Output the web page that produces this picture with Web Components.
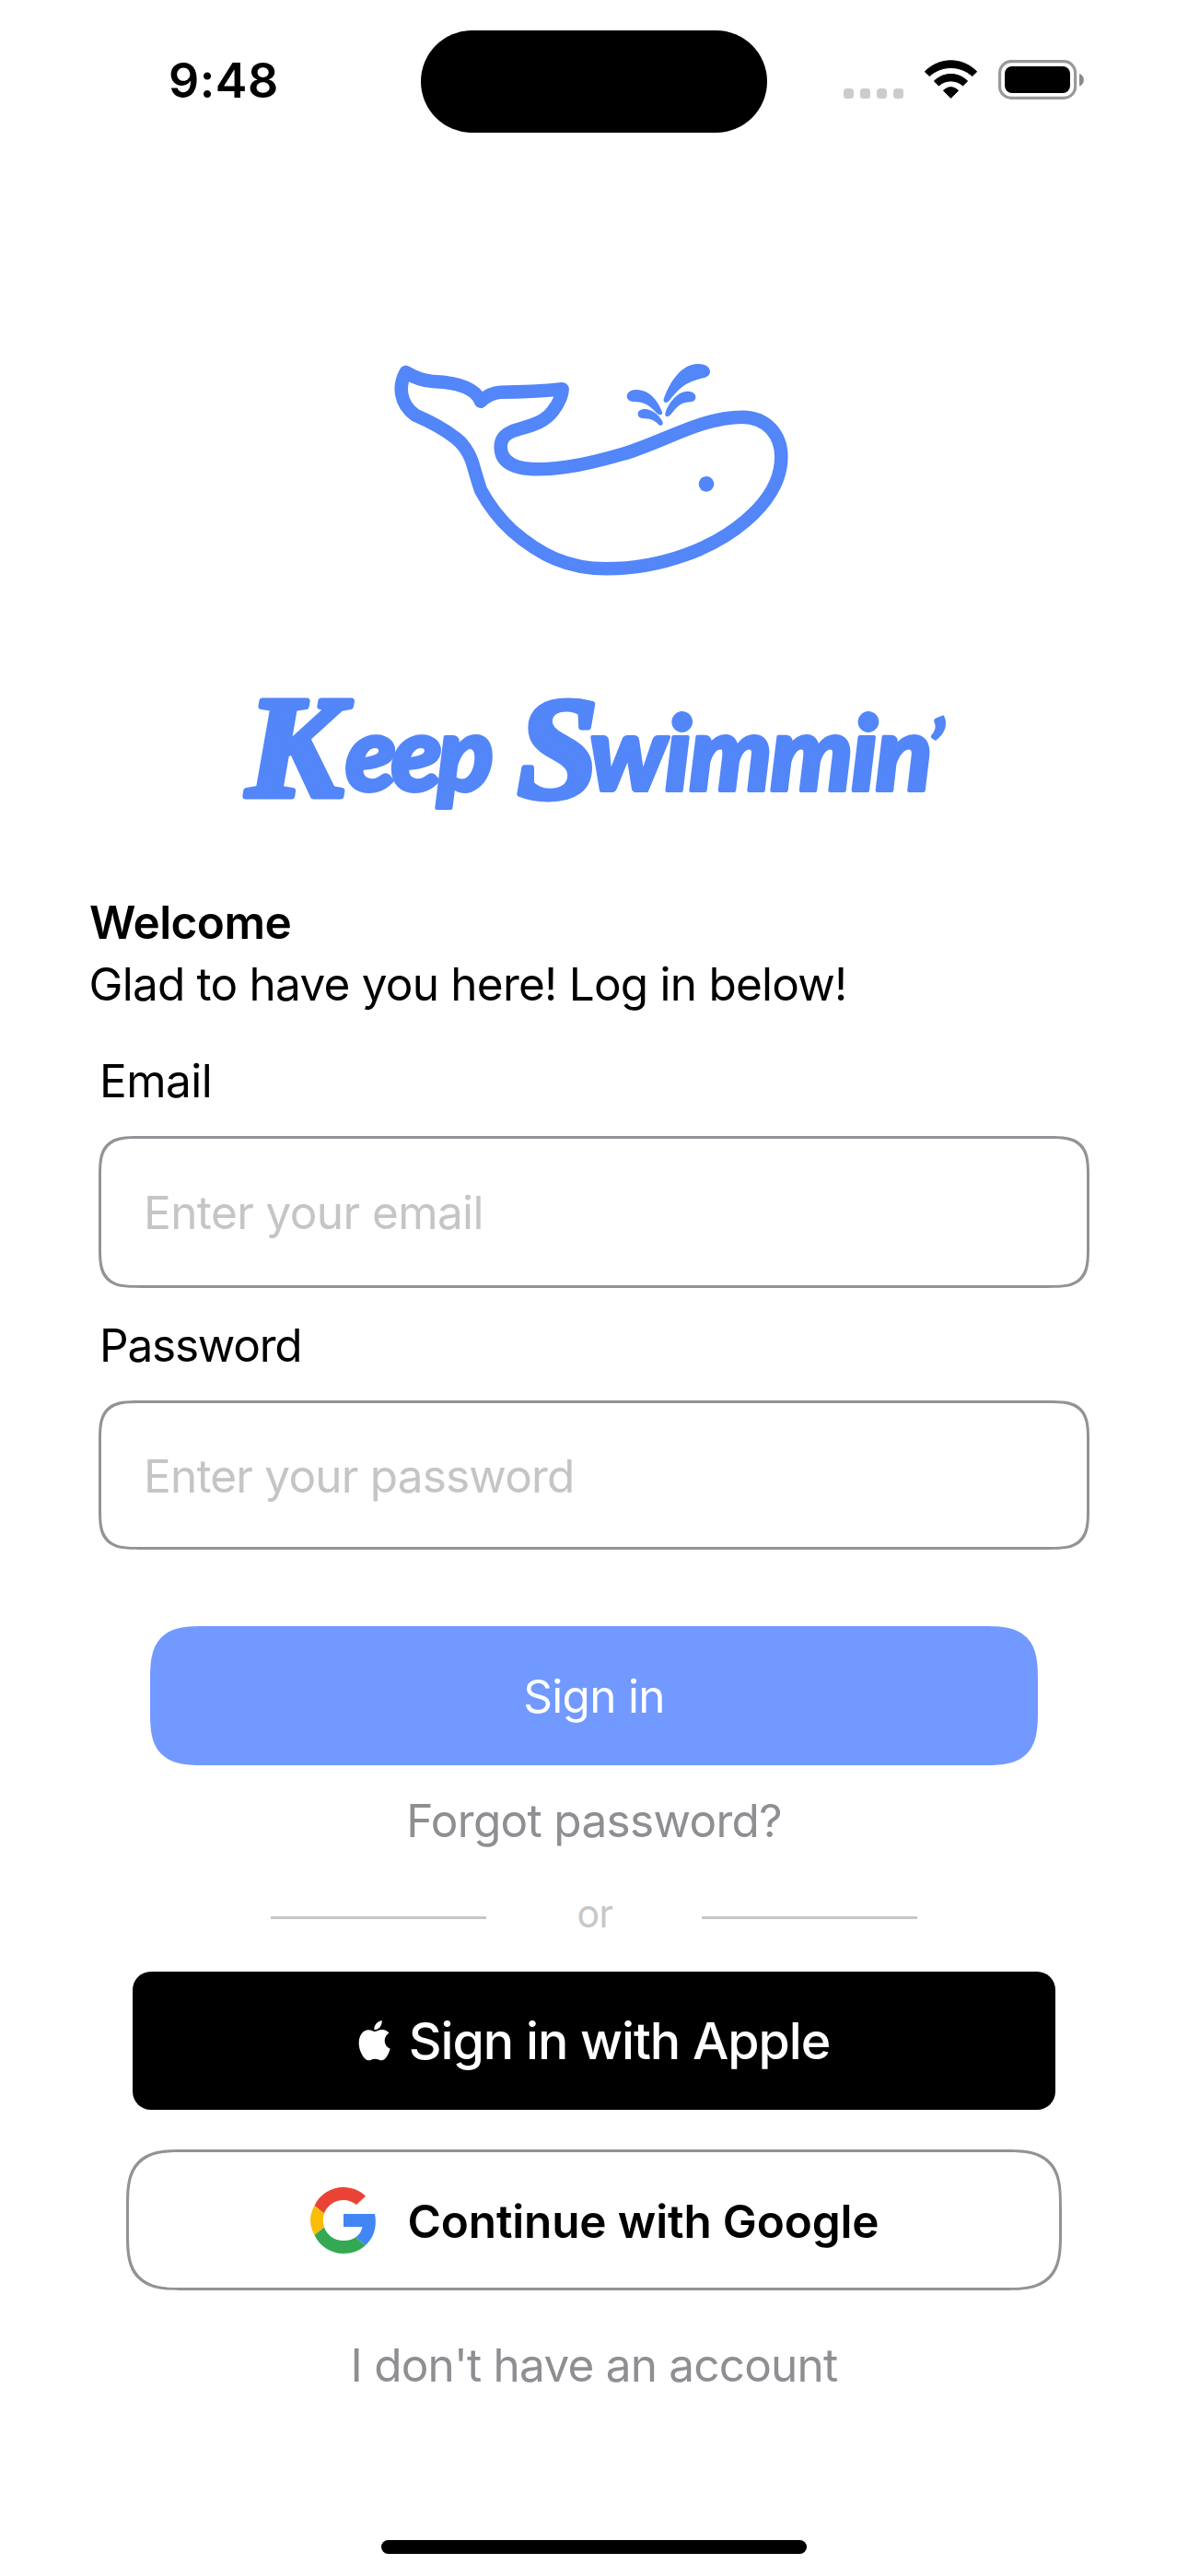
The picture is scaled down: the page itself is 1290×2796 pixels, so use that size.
<!DOCTYPE html>
<html lang="en">
<head>
<meta charset="utf-8">
<title>Keep Swimmin’</title>
<style>
  html, body { margin: 0; padding: 0; background: #fff; }
  body { width: 1290px; height: 2796px; overflow: hidden; font-family: Inter, "Liberation Sans", sans-serif; color: #000; }
</style>
</head>
<body>
<login-screen></login-screen>

<script>
const define = (name, html) => {
  const tpl = document.createElement('template');
  tpl.innerHTML = html;
  customElements.define(name, class extends HTMLElement {
    constructor() {
      super();
      this.attachShadow({ mode: 'open' }).append(tpl.content.cloneNode(true));
    }
  });
};

define('text-line', `
<style>
  :host { display: block; height: 60px; line-height: 60px; font-size: 49.5px; font-weight: 400; white-space: nowrap; }
</style><slot></slot>`);

define('status-bar', `
<style>
  :host { display: flex; justify-content: space-between; height: 111px; padding-top: 33px; }
  .time { box-sizing: border-box; width: 457px; padding-left: 183px; height: 109px; line-height: 110px; font-size: 52px; font-weight: 600; letter-spacing: .5px; }
  .island { width: 376px; height: 111px; border-radius: 56px; background: #000; }
  .icons { box-sizing: border-box; width: 457px; padding-left: 81px; height: 111px; }
  svg { display: block; margin-top: 27px; }
</style>
<div class="time">9:48</div>
<div class="island"></div>
<div class="icons">
  <svg width="264" height="52" viewBox="914 60 264 52">
    <g fill="#ccc"><rect x="916" y="96" width="11" height="11" rx="3.5"/><rect x="934" y="96" width="11" height="11" rx="3.5"/><rect x="952" y="96" width="11" height="11" rx="3.5"/><rect x="970" y="96" width="11" height="11" rx="3.5"/></g>
    <g fill="#000" stroke="#000" stroke-width="1" stroke-linejoin="round">
      <path d="M1004.3 77.8 C1020 61.8 1045 61.8 1060.7 77.8 L1055.7 82.6 C1042.500 70.500 1022.500 70.500 1009.300 82.600 Z"/>
      <path d="M1014.400 88 C1024.500 77.900 1040.500 77.900 1050.600 88 L1045.600 92.900 C1038 86.200 1027 86.200 1019.400 92.900 Z"/>
      <path d="M1024.400 98.300 C1029.500 93.400 1035.500 93.400 1040.600 98.300 L1032.500 106.300 Z"/>
    </g>
    <rect x="1085.600" y="66.600" width="82" height="39.800" rx="12.500" fill="none" stroke="#999" stroke-width="3.200"/>
    <rect x="1091" y="72" width="71" height="29" rx="8"/>
    <path d="M1172 80 C1178.500 82 1178.500 91.500 1172 93.500 Z" fill="#8a8a8a"/>
  </svg>
</div>`);

define('whale-mark', `
<style>:host { display: block; height: 280px; } svg { display: block; margin: 0 auto 0 400px; }</style>
<svg width="480" height="280" viewBox="0 0 1440 840" fill="#5286f9">
  <path fill="none" stroke="#5286f9" stroke-width="43.500" stroke-linejoin="round" d="M122 102
    C149 119 177 130 210 132 C262 134 345 143 366 197
    C384 180 405 168 430 167 C500 167 565 164 632 157
    C632 172 622 203 601 228 C569 272 515 278 472 293 C441 305 431 322 431 345
    C431 390 466 418 555 418 C640 418 745 393 830 368 C960 330 1085 248 1218 248
    C1300 248 1345 308 1345 378 C1345 458 1295 530 1230 585 C1130 672 960 742 775 742
    C650 742 560 698 468 618 C430 583 395 540 366 486
    C350 438 346 418 336 388 C322 353 305 332 285 317 C243 284 195 260 153 242
    C100 203 98 145 122 102 Z"/>
  <path d="M962 190 C973 158 1008 75 1075 75 C1120 75 1125 114 1090 121 C1030 136 1015 153 979 196 C971 206 959 200 962 190Z"/>
  <path d="M967 237 C973 211 1003 164 1040 164 C1073 164 1075 198 1047 199 C1014 201 1006 215 984 241 C976 250 965 247 967 237Z"/>
  <path d="M957 231 C947 204 921 159 873 159 C834 159 834 197 863 198 C900 199 914 208 941 237 C949 244 960 241 957 231Z"/>
  <path d="M959 265 C951 244 925 222 900 222 C871 222 873 251 893 252 C916 253 930 256 945 272 C952 279 962 275 959 265Z"/>
  <circle cx="1101" cy="466" r="25"/>
</svg>`);

define('brand-wordmark', `
<style>
  :host { display: block; height: 170px; }
  svg { display: block; margin-left: 240px; overflow: visible; }
  text { font-family: Lato, sans-serif; font-weight: 900; font-style: italic; font-size: 113px; fill: #5286f9; stroke: #5286f9; stroke-width: 4px; stroke-linejoin: round; }
  .cap { font-family: "Liberation Serif", serif; font-weight: 700; font-size: 157px; stroke-width: 7px; }
  .mark { font-size: 84px; stroke-width: 2px; }
</style>
<svg width="810" height="170" viewBox="0 0 810 170">
  <text><tspan class="cap" x="28" y="134">K</tspan><tspan x="135" y="128" letter-spacing="-5.500">eep</tspan></text>
  <text><tspan class="cap" x="322" y="135">S</tspan><tspan x="400" y="128" letter-spacing="-2">wimmin</tspan><tspan class="mark" x="767" y="112">’</tspan></text>
</svg>`);

define('form-field', `
<style>
  :host { display: block; }
  .label { margin-left: 108px; letter-spacing: var(--label-ls); }
  .box { margin: 30px 107px 0; height: var(--h); box-sizing: border-box; display: flex; align-items: center; padding: 1px 0 0 46px;
    border: 3px solid #929297; border-radius: 45px; corner-shape: superellipse(1.7); }
  .hint { color: #c5c5c7; letter-spacing: var(--hint-ls); }
</style>
<text-line class="label"><slot name="label"></slot></text-line>
<div class="box"><text-line class="hint"><slot></slot></text-line></div>`);

define('action-button', `
<style>
  :host { display: flex; align-items: center; justify-content: center; box-sizing: border-box; }
  :host([kind=primary]) { height: 151px; margin: 0 163px; border-radius: 60px; corner-shape: superellipse(1.6); background: #7199ff; color: #fff; letter-spacing: -.7px; }
  :host([kind=apple]) { height: 150px; margin: 0 144px; border-radius: 20px; background: #000; color: #fff; letter-spacing: -1.040px; }
  :host([kind=google]) { height: 153px; margin: 0 137px; border: 3px solid #929297; border-radius: 62px; corner-shape: superellipse(1.6); letter-spacing: -.160px; }
  :host([kind=apple]) text-line { font-size: 55.500px; font-weight: 500; }
  :host([kind=google]) text-line { font-weight: 600; padding-top: 2px; }
</style>
<slot name="icon"></slot><text-line><slot></slot></text-line>`);

define('apple-logo', `
<style>:host { display: block; width: 36px; height: 44px; margin: 0 19px 0 0; } svg { display: block; }</style>
<svg width="36" height="44" viewBox="0 0 108 132" fill="#fff">
  <path d="M77 0 C79 16 67 31 52 31 C50 16 63 2 77 0Z"/>
  <path d="M53 36 C60 36 67 30 78 30 C87 30 95 34 100 41 C80 53 82 83 104 92 C100 107 89 130 76 130 C68 130 65 125 55 125 C45 125 41 130 34 130 C20 130 2 101 2 74 C2 46 18 31 33 31 C42 31 48 36 53 36Z"/>
</svg>`);

define('google-logo', `
<style>:host { display: block; width: 71px; height: 72px; margin: 0 35px 0 1px; } svg { display: block; }</style>
<svg width="71" height="72" viewBox="0 0 71 72">
  <path fill="#ea4335" d="M4.500 20 C10 8 22 0 36 0 C45 0 54 3.500 60 9.700 L50 19 C46 16 42 14 36 14 C26.500 14 18 20 15 28.500Z"/>
  <path fill="#fbbc05" d="M4.500 20 L15 28.500 C13.500 33 13.500 39 15 43.500 L4.500 52 C-1.500 41 -1.500 30.500 4.500 20Z"/>
  <path fill="#34a853" d="M4.500 52 L15 43.500 C18 52 26 58 36 58 C41 58 45.500 57 49 54.500 L60 63 C53.500 69 45.500 72 36 72 C22 72 10 64 4.500 52Z"/>
  <path fill="#4285f4" d="M36 29 H70 C72.500 42 69.500 54.500 60 63 L49 54.500 C53 52 55.500 48 56.500 43 H36Z"/>
</svg>`);

define('or-divider', `
<style>
  :host { display: flex; align-items: center; height: 60px; margin: 0 294px; justify-content: space-between; }
  i { width: 234px; height: 3px; margin-top: 9px; background: #c7c7c7; }
  text-line { font-size: 41px; color: #c7c7c7; letter-spacing: -.5px; margin-left: 2px; }
</style>
<i></i><text-line><slot></slot></text-line><i></i>`);

define('login-screen', `
<style>
  :host { display: flex; flex-direction: column; width: 1290px; height: 2796px; background: #fff; }
  whale-mark { margin-top: 226px; }
  brand-wordmark { margin-top: 80px; }
  .welcome { margin: 71px 0 0 97px; font-weight: 600; letter-spacing: -.560px; }
  .intro { margin: 7px 0 0 96.500px; letter-spacing: -.770px; }
  .email { margin-top: 45px; --label-ls: -.550px; --hint-ls: -.600px; --h: 165px; }
  .password { margin-top: 32px; --label-ls: -1.200px; --hint-ls: -.800px; --h: 162px; }
  .signin { margin-top: 83px; }
  .link { text-align: center; color: #8e8e93; }
  .forgot { margin-top: 30px; letter-spacing: -.680px; }
  or-divider { margin-top: 41px; }
  .apple { margin-top: 33px; }
  .google { margin-top: 43px; }
  .signup { margin-top: 51px; letter-spacing: -.790px; }
  .home { width: 462px; height: 15px; border-radius: 8px; background: #000; margin: 160px auto 0; }
</style>
<status-bar></status-bar>
<whale-mark></whale-mark>
<brand-wordmark></brand-wordmark>
<text-line class="welcome">Welcome</text-line>
<text-line class="intro">Glad to have you here! Log in below!</text-line>
<form-field class="email"><span slot="label">Email</span>Enter your email</form-field>
<form-field class="password"><span slot="label">Password</span>Enter your password</form-field>
<action-button class="signin" kind="primary">Sign in</action-button>
<text-line class="link forgot">Forgot password?</text-line>
<or-divider>or</or-divider>
<action-button class="apple" kind="apple"><apple-logo slot="icon"></apple-logo>Sign in with Apple</action-button>
<action-button class="google" kind="google"><google-logo slot="icon"></google-logo>Continue with Google</action-button>
<text-line class="link signup">I don't have an account</text-line>
<div class="home"></div>`);
</script>
</body>
</html>
